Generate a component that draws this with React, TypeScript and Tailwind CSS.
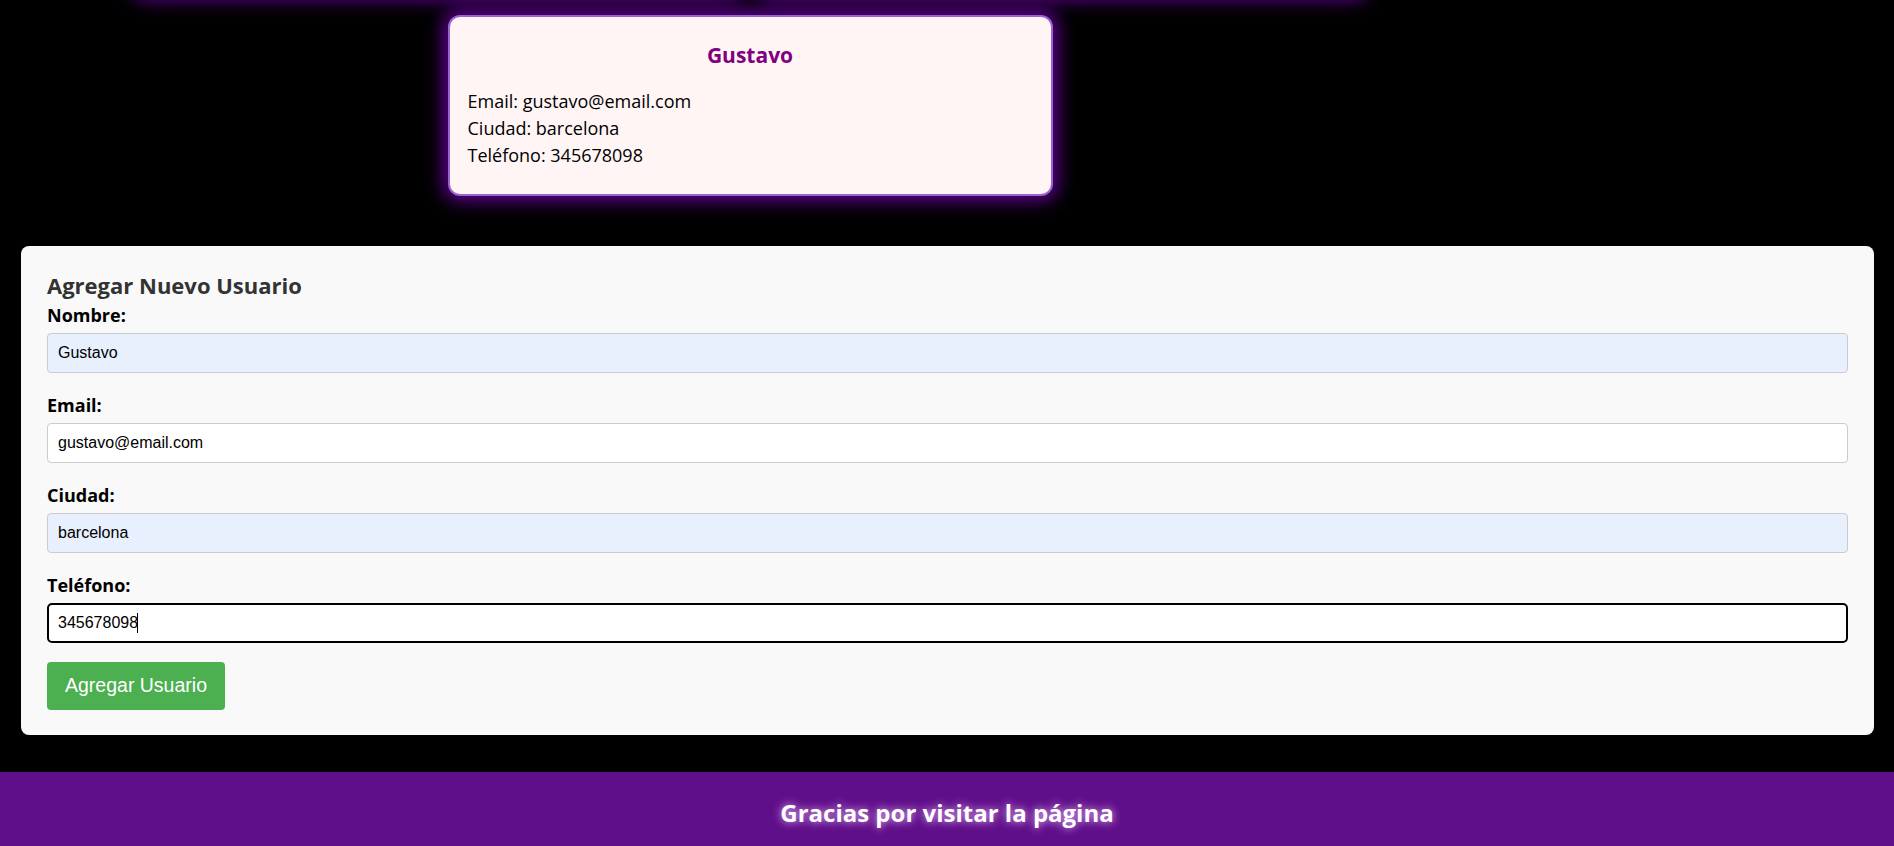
const users = [
  { nombre: "Ana", email: "ana@email.com", ciudad: "madrid", telefono: "612345678" },
  { nombre: "Luis", email: "luis@email.com", ciudad: "sevilla", telefono: "698765432" },
  { nombre: "Gustavo", email: "gustavo@email.com", ciudad: "barcelona", telefono: "345678098" },
];

const segoe = "font-['Open_Sans','Noto_Sans',sans-serif]";
const cardBox =
  "w-[605px] rounded-xl border-2 border-[#9b63cf] bg-[#fff5f5] shadow-[0_0_18px_5px_rgba(110,0,170,0.85)]";

function UserCard({ user }: { user: (typeof users)[number] }) {
  return (
    <div className={`${cardBox} px-[18px] pt-[24px] pb-[25px]`}>
      <h3 className="text-center text-[21px] leading-[28px] font-bold text-[#800080]">{user.nombre}</h3>
      <div className="mt-[19px] text-[18px] leading-[27px] text-black">
        <p>Email: {user.email}</p>
        <p>Ciudad: {user.ciudad}</p>
        <p>Teléfono: {user.telefono}</p>
      </div>
    </div>
  );
}

function Field({
  label,
  value,
  autofill,
  focused,
}: {
  label: string;
  value: string;
  autofill?: boolean;
  focused?: boolean;
}) {
  return (
    <div className="mb-[20px]">
      <label className="block text-[18px] leading-[24px] font-bold text-black">{label}</label>
      <div className="relative mt-[6px]">
        <input
          readOnly
          value={value}
          className={
            focused
              ? "h-[40px] w-full rounded-[5px] border-2 border-black bg-white px-[9px] font-['Liberation_Sans',Arial,sans-serif] text-[16px] text-black outline-none"
              : autofill
                ? "h-[40px] w-full rounded-[4px] border border-[#cccccc] bg-[#e8f0fe] px-[10px] font-['Liberation_Sans',Arial,sans-serif] text-[16px] text-black outline-none"
                : "h-[40px] w-full rounded-[4px] border border-[#cccccc] bg-white px-[10px] font-['Liberation_Sans',Arial,sans-serif] text-[16px] text-black outline-none"
          }
        />
        {focused && <span className="absolute top-[10px] left-[90px] h-[20px] w-px bg-black" />}
      </div>
    </div>
  );
}

export default function App() {
  const [gustavo] = users.slice(-1);
  return (
    <div className={`min-h-screen overflow-hidden bg-black ${segoe}`}>
      {/* LISTA DE USUARIOS (la fila de arriba queda fuera de la vista) */}
      <div className="-mt-[185px] flex w-[1500px] flex-wrap justify-center gap-5">
        <div className={`${cardBox} h-[180px]`} />
        <div className={`${cardBox} h-[180px]`} />
        <UserCard user={gustavo} />
      </div>

      {/* FORMULARIO */}
      <div className="mt-[50px] ml-[21px] mr-[20px] rounded-lg bg-[#f9f9f9] px-[26px] pt-[26px] pb-[25px]">
        <h2 className="text-[22px] leading-[26px] font-bold text-[#333333]">Agregar Nuevo Usuario</h2>
        <div className="mt-[5px]">
          <Field label="Nombre:" value="Gustavo" autofill />
          <Field label="Email:" value="gustavo@email.com" />
          <Field label="Ciudad:" value="barcelona" autofill />
          <Field label="Teléfono:" value="345678098" focused />
        </div>
        <button className="-mt-px h-[48px] rounded-[4px] bg-[#4caf50] px-[18px] font-['Liberation_Sans',Arial,sans-serif] text-[19.5px] text-white">
          Agregar Usuario
        </button>
      </div>

      {/* PIE */}
      <footer className="mt-[37px] bg-[#600f8a] py-[25px] text-center text-[24px] leading-[32px] font-bold text-white [text-shadow:0_0_8px_#f0c0ff]">
        Gracias por visitar la página
      </footer>
    </div>
  );
}
